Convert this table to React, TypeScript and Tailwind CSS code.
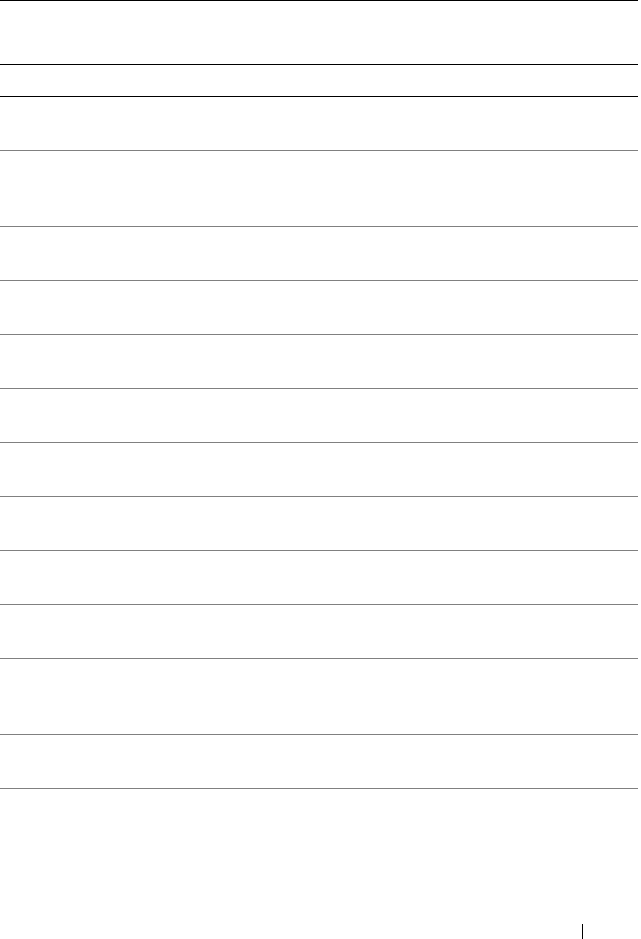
const bodyRows = [53, 75, 53, 53, 53, 53, 53, 53, 53, 53, 75, 53];

export default function App() {
  return (
    <div className="min-h-[939px] w-[641px] bg-white font-['Liberation_Sans',sans-serif]">
      <div className="w-[638px]">
        <div className="h-[65px] border-y border-black" />
        <div className="h-[32px] border-b border-black" />
        {bodyRows.map((h, i) => (
          <div
            key={i}
            className={`border-b border-[#808080] ${h === 75 ? "h-[76px]" : "h-[54px]"}`}
          />
        ))}
      </div>
      <div className="mt-[135px] flex">
        <span className="ml-[582px] block h-[15px] w-px bg-black" />
      </div>
    </div>
  );
}
